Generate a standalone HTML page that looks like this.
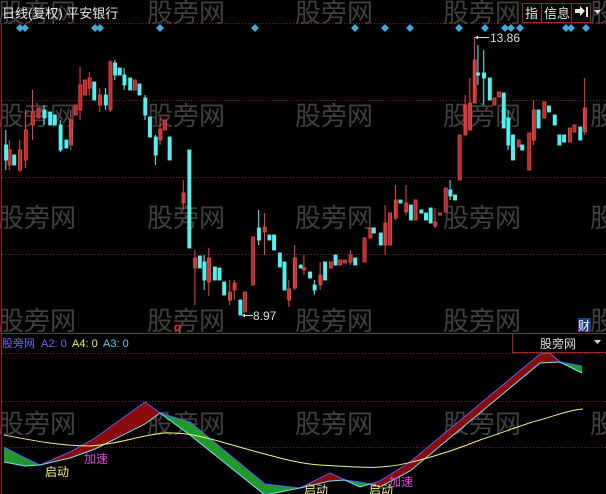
<!DOCTYPE html>
<html><head><meta charset="utf-8"><style>
html,body{margin:0;padding:0;background:#000;width:606px;height:494px;overflow:hidden}
svg{display:block;font-family:"Liberation Sans","Noto Sans CJK SC",sans-serif}
</style></head><body>
<svg width="606" height="494" viewBox="0 0 606 494" xmlns="http://www.w3.org/2000/svg">
<rect width="606" height="494" fill="#000"/>
<g fill="#404040" font-size="26">
<text x="-2" y="22">股旁网</text><text x="147" y="22">股旁网</text><text x="295" y="22">股旁网</text><text x="443" y="22">股旁网</text><text x="590" y="22">股旁网</text>
<text x="-2" y="125">股旁网</text><text x="147" y="125">股旁网</text><text x="295" y="125">股旁网</text><text x="443" y="125">股旁网</text><text x="590" y="125">股旁网</text>
<text x="-2" y="227">股旁网</text><text x="147" y="227">股旁网</text><text x="295" y="227">股旁网</text><text x="443" y="227">股旁网</text><text x="590" y="227">股旁网</text>
<text x="-2" y="330">股旁网</text><text x="147" y="330">股旁网</text><text x="295" y="330">股旁网</text><text x="443" y="330">股旁网</text><text x="590" y="330">股旁网</text>
<text x="-2" y="433">股旁网</text><text x="147" y="433">股旁网</text><text x="295" y="433">股旁网</text><text x="443" y="433">股旁网</text><text x="590" y="433">股旁网</text>
</g>
<g stroke="#8a1a1a" stroke-width="1" stroke-dasharray="1,2">
<line x1="2" y1="23.5" x2="606" y2="23.5"/><line x1="2" y1="100.5" x2="606" y2="100.5"/>
<line x1="2" y1="177.5" x2="606" y2="177.5"/><line x1="2" y1="254.5" x2="606" y2="254.5"/>
<line x1="2" y1="353.5" x2="606" y2="353.5"/><line x1="2" y1="401.5" x2="606" y2="401.5"/><line x1="2" y1="447.5" x2="606" y2="447.5"/>
</g>
<line x1="1.5" y1="23" x2="1.5" y2="494" stroke="#a02020"/>
<line x1="0" y1="333.5" x2="606" y2="333.5" stroke="#a02020"/>
<text x="2" y="18" fill="#e8e8e8" font-size="13">日线(复权) 平安银行</text>
<g stroke="#a02020" fill="none"><rect x="522.5" y="3.5" width="19" height="19"/><rect x="541.5" y="3.5" width="30" height="19"/><rect x="571.5" y="3.5" width="19" height="19"/></g>
<text x="525" y="18" fill="#e8e8e8" font-size="13">指</text>
<text x="544" y="18" fill="#e8e8e8" font-size="13">信息</text>
<path d="M575 9h5v-3l5 5-5 5v-3h-5z M586 7h2v10h-2z" fill="#e8e8e8"/>
<path d="M594 10h7l-3.5 4z" fill="#e8e8e8"/>
<g fill="#3fa9d8">
<path d="M20 24l4 4-4 4-4-4z"/><path d="M25 24l4 4-4 4-4-4z"/><path d="M95 24l4 4-4 4-4-4z"/><path d="M100 24l4 4-4 4-4-4z"/>
<path d="M160 24l4 4-4 4-4-4z"/><path d="M255 24l4 4-4 4-4-4z"/><path d="M355 24l4 4-4 4-4-4z"/><path d="M385 24l4 4-4 4-4-4z"/>
<path d="M410 24l4 4-4 4-4-4z"/><path d="M459 24l4 4-4 4-4-4z"/><path d="M485 24l4 4-4 4-4-4z"/><path d="M505 24l4 4-4 4-4-4z"/>
<path d="M511 24l4 4-4 4-4-4z"/><path d="M520 24l4 4-4 4-4-4z"/><path d="M566 24l4 4-4 4-4-4z"/><path d="M571 24l4 4-4 4-4-4z"/><path d="M586 24l4 4-4 4-4-4z"/>
</g>
<g transform="matrix(1.16 0 0 1 0 0)">
<g stroke="#e04444" fill="#b02828" stroke-width="0.9">
<line x1="8" y1="140" x2="8" y2="170"/><rect x="7" y="150" width="2.5" height="15"/>
<line x1="17" y1="140" x2="17" y2="172"/><rect x="16" y="150" width="2.5" height="20"/>
<line x1="22" y1="110" x2="22" y2="168"/><rect x="21" y="130" width="2.5" height="30"/>
<line x1="28" y1="90" x2="28" y2="140"/><rect x="27" y="112" width="2.5" height="13"/>
<rect x="32" y="108" width="2.5" height="10"/>
<rect x="60" y="120" width="2.5" height="25"/><line x1="61" y1="110" x2="61" y2="150"/>
<rect x="64" y="105" width="2.5" height="10"/>
<line x1="69" y1="67" x2="69" y2="120"/><rect x="68" y="85" width="2.5" height="25"/>
<rect x="72" y="80" width="2.5" height="15"/><line x1="77" y1="72" x2="77" y2="95"/><rect x="76" y="78" width="2.5" height="10"/>
<rect x="85" y="95" width="2.5" height="10"/><line x1="86" y1="88" x2="86" y2="112"/>
<line x1="95" y1="60" x2="95" y2="112"/><rect x="94" y="62" width="2.5" height="48"/>
<rect x="115" y="80" width="2.5" height="10"/>
<rect x="137" y="129" width="2.5" height="11"/><line x1="138" y1="118" x2="138" y2="145"/>
<rect x="141" y="120" width="2.5" height="10"/>
</g>
<g stroke="#54f0f0" fill="#54f0f0" stroke-width="0.9">
<rect x="4" y="145" width="2.5" height="15"/><line x1="5" y1="130" x2="5" y2="170"/>
<rect x="11" y="155" width="2.5" height="10"/>
<rect x="37" y="110" width="2.5" height="8"/><line x1="38" y1="105" x2="38" y2="125"/>
<rect x="42" y="112" width="2.5" height="13"/><rect x="46" y="115" width="2.5" height="10"/>
<rect x="51" y="125" width="2.5" height="25"/><line x1="52" y1="120" x2="52" y2="152"/>
<rect x="56" y="140" width="2.5" height="8"/>
<rect x="80" y="82" width="2.5" height="18"/><rect x="90" y="95" width="2.5" height="10"/><line x1="91" y1="88" x2="91" y2="110"/>
<rect x="98" y="63" width="2.5" height="12"/><line x1="99" y1="60" x2="99" y2="80"/>
<rect x="102" y="68" width="2.5" height="7"/><rect x="106" y="75" width="2.5" height="10"/><line x1="107" y1="68" x2="107" y2="90"/>
<rect x="111" y="78" width="2.5" height="12"/><rect x="119" y="84" width="2.5" height="11"/>
<rect x="124" y="98" width="2.5" height="17"/><line x1="125" y1="95" x2="125" y2="120"/>
<rect x="128" y="117" width="2.5" height="20"/><rect x="133" y="137" width="2.5" height="18"/><line x1="134" y1="135" x2="134" y2="165"/>
<rect x="145" y="137" width="2.5" height="23"/>
</g>
</g>
<g transform="matrix(1.16 0 0 1 0 0)">
<g stroke="#e04444" fill="#b02828" stroke-width="0.9">
<rect x="157" y="193" width="2.5" height="10"/><line x1="158" y1="180" x2="158" y2="210"/>
<rect x="167" y="258" width="2.5" height="10"/><line x1="168" y1="250" x2="168" y2="305"/>
<rect x="179" y="258" width="2.5" height="24"/><line x1="180" y1="248" x2="180" y2="296"/>
<rect x="197" y="292" width="2.5" height="8"/><line x1="198" y1="280" x2="198" y2="305"/>
<rect x="201" y="283" width="2.5" height="7"/><line x1="202" y1="280" x2="202" y2="300"/>
<rect x="210" y="292" width="2.5" height="20"/>
<rect x="217" y="237" width="2.5" height="48"/>
<rect x="227" y="227" width="2.5" height="5"/><line x1="228" y1="213" x2="228" y2="255"/>
<rect x="248" y="289" width="2.5" height="11"/><line x1="249" y1="280" x2="249" y2="307"/>
<rect x="253" y="258" width="2.5" height="30"/><line x1="254" y1="245" x2="254" y2="290"/>
<rect x="261" y="268" width="2.5" height="2"/><line x1="262" y1="255" x2="262" y2="275"/>
<rect x="275" y="275" width="2.5" height="10"/><line x1="276" y1="262" x2="276" y2="290"/>
<rect x="284" y="262" width="2.5" height="6"/><rect x="292" y="260" width="2.5" height="5"/>
<rect x="296" y="260" width="2.5" height="3"/><line x1="302" y1="250" x2="302" y2="265"/><rect x="301" y="255" width="2.5" height="7"/>
<rect x="313" y="238" width="2.5" height="24"/><rect x="318" y="228" width="2.5" height="10"/>
<rect x="331" y="223" width="2.5" height="22"/><line x1="332" y1="205" x2="332" y2="255"/>
<rect x="335" y="213" width="2.5" height="32"/><rect x="340" y="200" width="2.5" height="18"/><line x1="341" y1="185" x2="341" y2="220"/>
<rect x="349" y="203" width="2.5" height="9"/><line x1="350" y1="185" x2="350" y2="215"/>
<rect x="357" y="200" width="2.5" height="20"/><rect x="374" y="222" width="2.5" height="4"/><line x1="375" y1="208" x2="375" y2="228"/>
<rect x="378" y="213" width="2.5" height="2"/><rect x="383" y="188" width="2.5" height="24"/>
<rect x="395" y="135" width="2.5" height="45"/>
<rect x="400" y="105" width="2.5" height="30"/><line x1="401" y1="95" x2="401" y2="135"/>
<rect x="404" y="103" width="2.5" height="27"/><line x1="405" y1="78" x2="405" y2="130"/>
<rect x="408" y="60" width="2.5" height="43"/><line x1="409" y1="37" x2="409" y2="103"/>
<rect x="425" y="98" width="2.5" height="7"/><rect x="429" y="92" width="2.5" height="5"/>
<rect x="446" y="140" width="2.5" height="7"/><rect x="455" y="133" width="2.5" height="37"/>
<rect x="459" y="110" width="2.5" height="30"/><line x1="460" y1="100" x2="460" y2="145"/>
<rect x="468" y="102" width="2.5" height="16"/><rect x="490" y="128" width="2.5" height="14"/>
<rect x="494" y="125" width="2.5" height="7"/><rect x="503" y="108" width="2.5" height="24"/><line x1="504" y1="78" x2="504" y2="135"/>
</g>
<g stroke="#54f0f0" fill="#54f0f0" stroke-width="0.9">
<rect x="162" y="150" width="2.5" height="98"/>
<rect x="171" y="256" width="2.5" height="12"/><rect x="175" y="262" width="2.5" height="18"/><line x1="176" y1="255" x2="176" y2="290"/>
<rect x="184" y="267" width="2.5" height="13"/><rect x="188" y="268" width="2.5" height="12"/>
<rect x="192" y="282" width="2.5" height="13"/><rect x="206" y="300" width="2.5" height="15"/>
<rect x="222" y="228" width="2.5" height="12"/><line x1="223" y1="210" x2="223" y2="245"/>
<rect x="231" y="235" width="2.5" height="5"/><rect x="235" y="235" width="2.5" height="15"/>
<rect x="240" y="253" width="2.5" height="14"/><rect x="244" y="262" width="2.5" height="28"/>
<rect x="258" y="265" width="2.5" height="3"/><rect x="266" y="272" width="2.5" height="6"/>
<rect x="270" y="285" width="2.5" height="5"/><line x1="271" y1="280" x2="271" y2="295"/>
<rect x="279" y="262" width="2.5" height="18"/><rect x="288" y="255" width="2.5" height="10"/>
<rect x="305" y="258" width="2.5" height="7"/><rect x="321" y="228" width="2.5" height="5"/>
<rect x="327" y="233" width="2.5" height="12"/><rect x="344" y="200" width="2.5" height="3"/>
<rect x="353" y="205" width="2.5" height="15"/><rect x="362" y="210" width="2.5" height="3"/>
<rect x="366" y="213" width="2.5" height="7"/><rect x="370" y="208" width="2.5" height="15"/>
<rect x="387" y="190" width="2.5" height="6"/><line x1="388" y1="180" x2="388" y2="200"/><rect x="391" y="195" width="2.5" height="5"/>
<rect x="411" y="73" width="2.5" height="2"/><line x1="412" y1="45" x2="412" y2="85"/>
<rect x="416" y="73" width="2.5" height="5"/><line x1="417" y1="50" x2="417" y2="105"/>
<rect x="421" y="78" width="2.5" height="22"/>
<rect x="433" y="93" width="2.5" height="35"/><rect x="437" y="118" width="2.5" height="27"/><line x1="438" y1="110" x2="438" y2="150"/>
<rect x="441" y="135" width="2.5" height="25"/><rect x="449" y="145" width="2.5" height="5"/>
<rect x="463" y="110" width="2.5" height="18"/><rect x="472" y="106" width="2.5" height="6"/>
<rect x="477" y="115" width="2.5" height="10"/><rect x="481" y="135" width="2.5" height="10"/><rect x="485" y="135" width="2.5" height="7"/>
<rect x="499" y="127" width="2.5" height="13"/>
</g>
</g>
<path d="M475 37.5h14" stroke="#ddd"/><path d="M475 37.5l3-2v4z" fill="#ddd"/>
<text x="490" y="42" fill="#ddd" font-size="12">13.86</text>
<path d="M243 315.5h10" stroke="#ddd"/><path d="M242 315.5l3-2v4z" fill="#ddd"/>
<text x="253" y="320" fill="#ddd" font-size="12">8.97</text>
<text x="174" y="331" fill="#e03030" font-size="12" font-weight="bold">q</text>
<rect x="578" y="318" width="13" height="14" fill="#1a3a8a"/><text x="578" y="330" fill="#fff" font-size="12">财</text>
<text x="2" y="347" fill="#6a6af0" font-size="11">股旁网</text>
<text x="41" y="347" fill="#6a6af0" font-size="11">A2: 0</text>
<text x="72" y="347" fill="#f0f060" font-size="11">A4: 0</text>
<text x="103" y="347" fill="#54d0f0" font-size="11">A3: 0</text>
<rect x="512.5" y="333.5" width="94" height="19" fill="#000" stroke="#a02020"/>
<text x="540" y="348" fill="#ddd" font-size="12">股旁网</text>
<path d="M594 340h7l-3.5 4z" fill="#ddd"/>
<path d="M4 447 L25 458 L40 465 L25 466 L4 462Z" fill="#1f9a2a"/>
<path d="M40 465 L70 452 L95 438 L145 402 L160 413 L145 424 L95 449 L70 458Z" fill="#8a0a0a"/>
<path d="M160 413 L190 422 L265 484 L300 488 L265 495 L190 435Z" fill="#1f9a2a"/>
<path d="M300 488 L330 473 L345 480 L330 481Z" fill="#8a0a0a"/>
<path d="M345 480 L360 482 L370 484 L360 487Z" fill="#1f9a2a"/>
<path d="M370 484 L380 481 L410 462 L540 354 L550 353 L560 362 L540 363 L410 471 L380 487Z" fill="#8a0a0a"/>
<path d="M560 362 L582 366 L582 373 L575 370Z" fill="#1f9a2a"/>
<path d="M4 447 L25 458 L40 465 L70 452 L95 438 L145 402 L160 413 L190 422 L265 484 L300 488 L330 473 L345 480 L360 482 L370 484 L380 481 L410 462 L540 354 L550 353 L560 362 L582 366" fill="none" stroke="#5a5af0" stroke-width="1"/>
<path d="M4 462 L25 466 L40 465 L70 458 L95 449 L145 424 L160 413 L190 435 L265 495 L300 488 L330 481 L345 480 L360 487 L370 484 L380 487 L410 471 L540 363 L560 362 L582 373" fill="none" stroke="#80e0f0" stroke-width="1"/>
<path d="M4 435 C30 440 60 446 90 446 C120 444 140 435 165 433 C195 432 220 442 250 450 C280 458 300 464 320 465 C350 467 370 468 380 467 C400 466 410 462 420 460 C450 452 470 444 480 440 C510 430 530 422 540 420 C560 414 570 410 583 409" fill="none" stroke="#f0f080" stroke-width="1"/>
<text x="45" y="476" fill="#f0f080" font-size="12">启动</text>
<text x="84" y="463" fill="#e040e0" font-size="12">加速</text>
<text x="304" y="494" fill="#f0f080" font-size="12">启动</text>
<text x="369" y="494" fill="#f0f080" font-size="12">启动</text>
<text x="389" y="486" fill="#e040e0" font-size="12">加速</text>
</svg>
</body></html>
